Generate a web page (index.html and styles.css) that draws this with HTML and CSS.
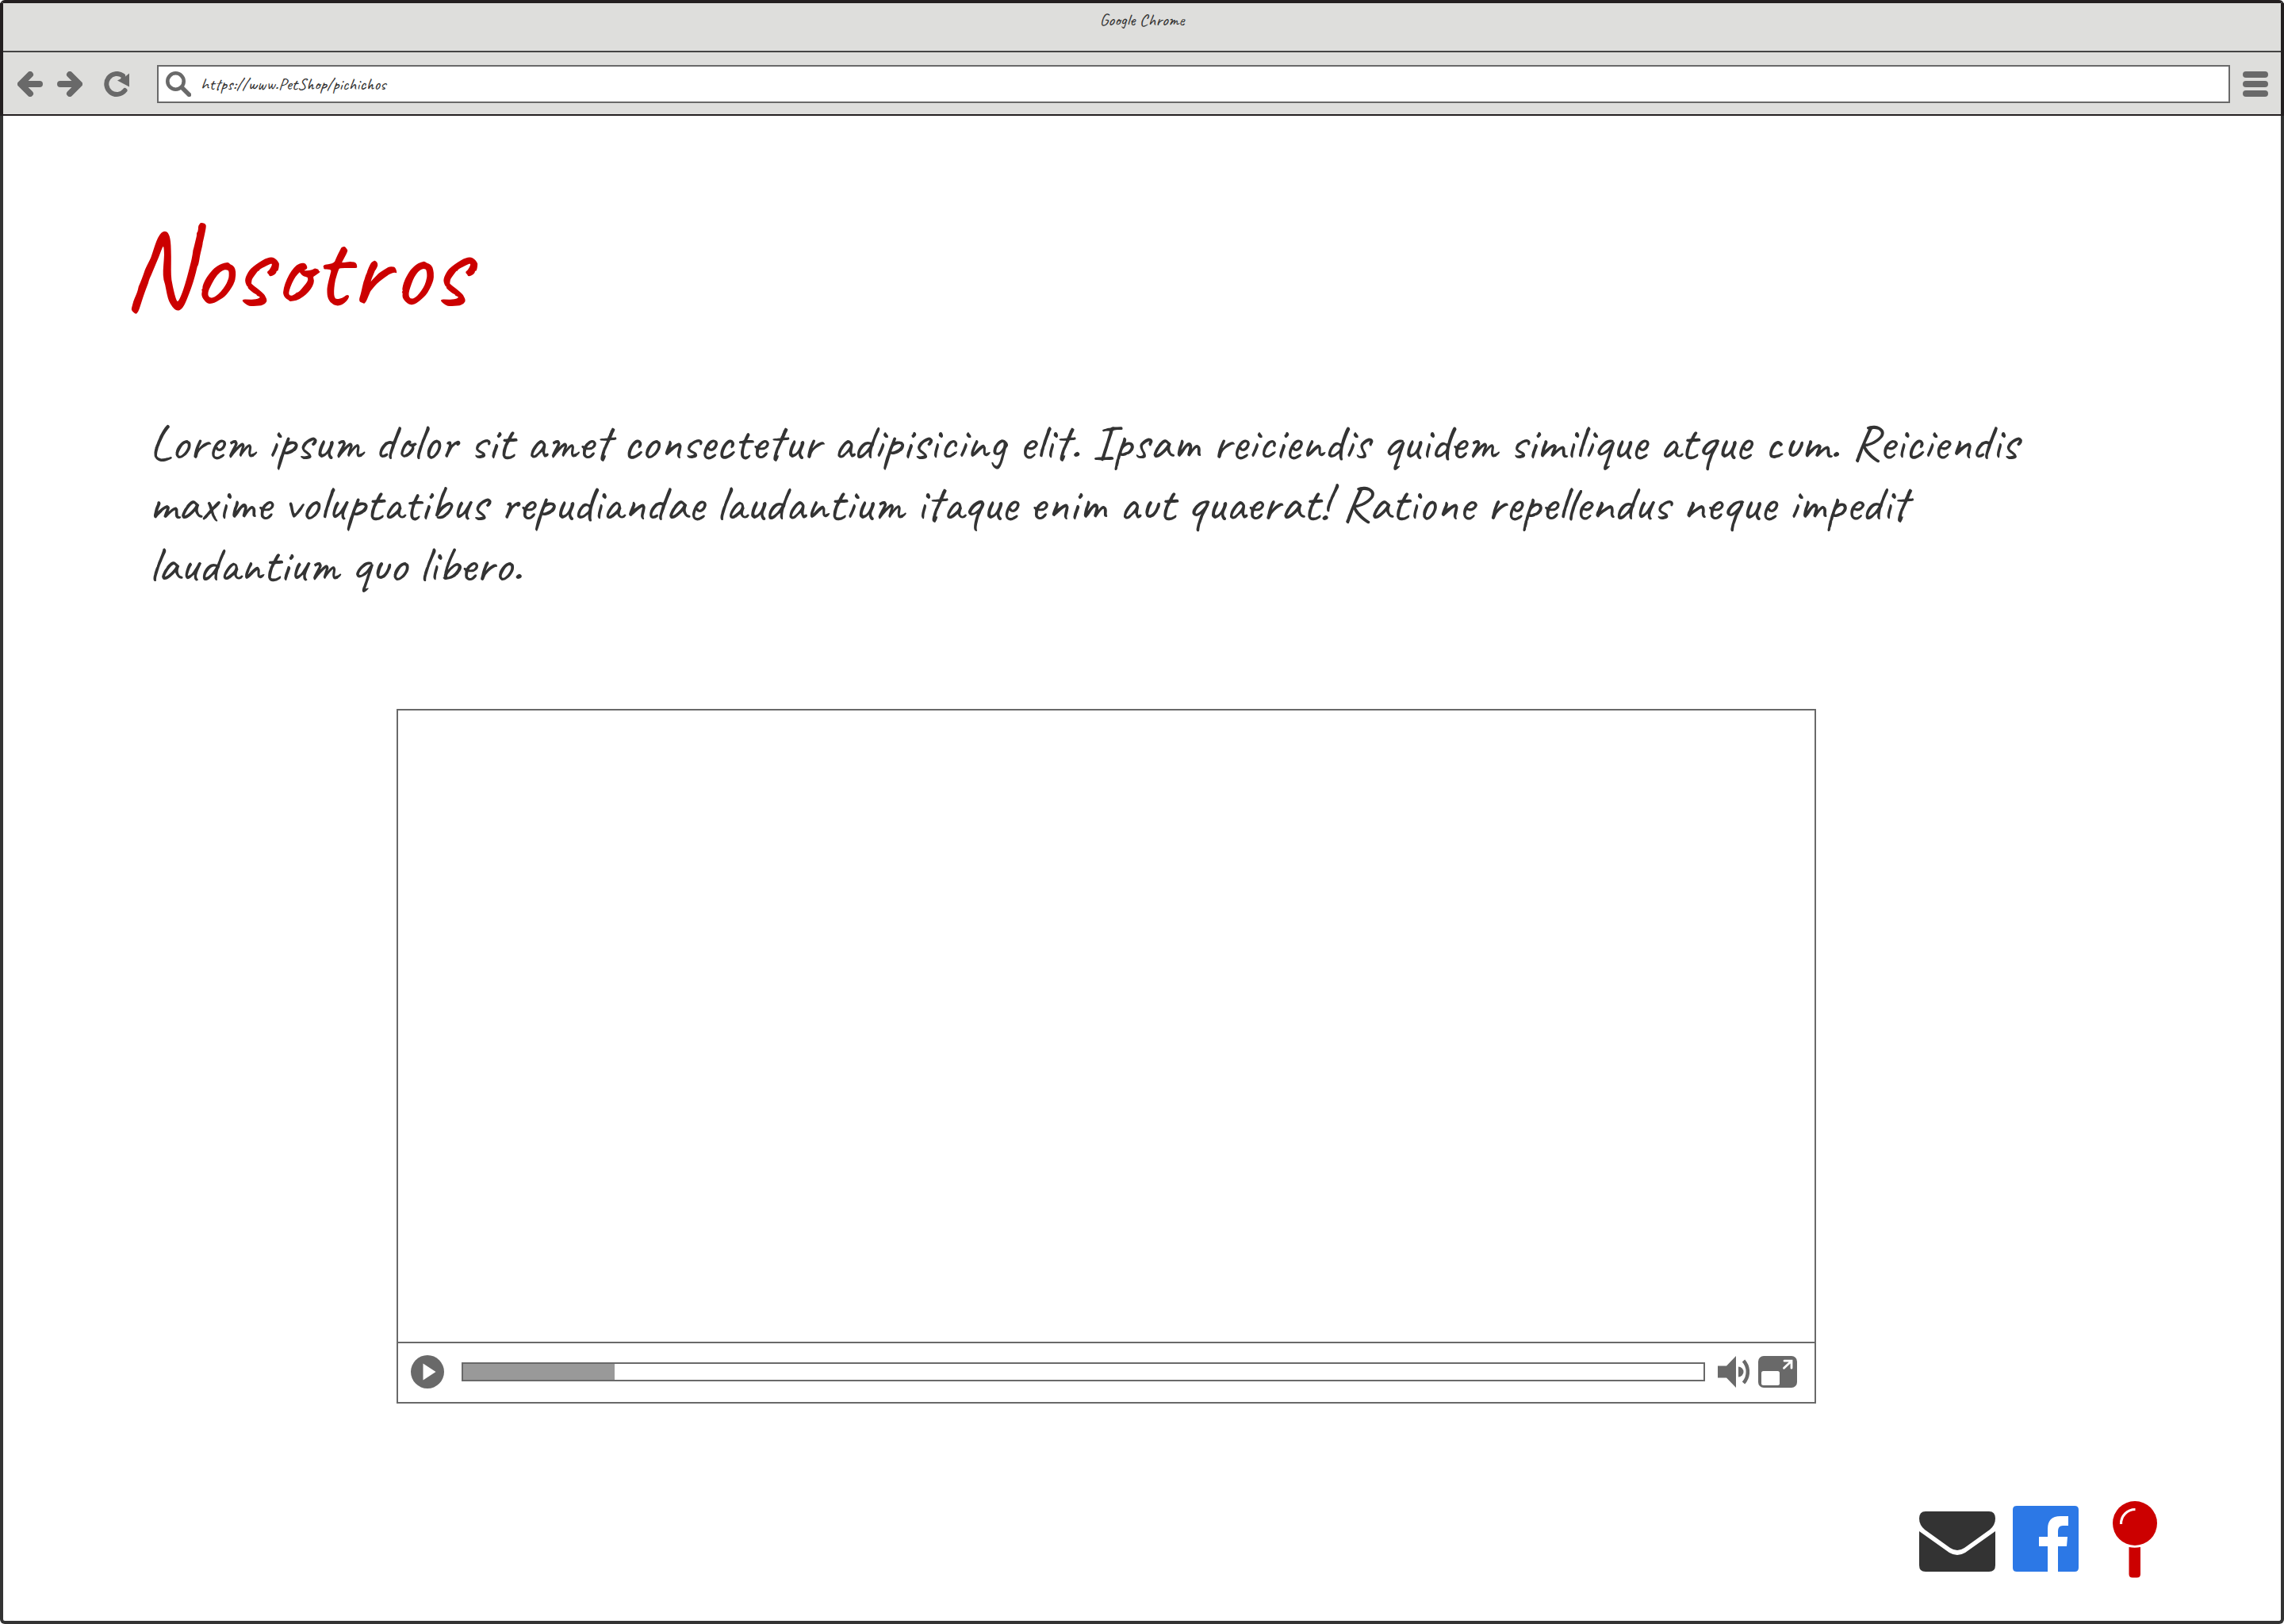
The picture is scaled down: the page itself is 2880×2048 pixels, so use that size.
FILE: index.html
```html
<!DOCTYPE html>
<html lang="es">
<head>
<meta charset="utf-8">
<title>Nosotros</title>
<link rel="stylesheet" href="styles.css">
</head>
<body>
<div class="window">
  <header class="chrome">
    <div class="titlebar">Google Chrome</div>
    <nav class="toolbar">
      <button class="tool back" type="button" aria-label="Atrás">
        <svg viewBox="0 0 32 32"><path d="M16 4 4 16l12 12M5 16h23" fill="none" stroke="currentColor" stroke-width="8" stroke-linecap="round" stroke-linejoin="round"/></svg>
      </button>
      <button class="tool forward" type="button" aria-label="Adelante">
        <svg viewBox="0 0 32 32"><path d="M16 4l12 12-12 12M27 16H4" fill="none" stroke="currentColor" stroke-width="8" stroke-linecap="round" stroke-linejoin="round"/></svg>
      </button>
      <button class="tool reload" type="button" aria-label="Recargar">
        <svg viewBox="0 0 32 32"><path d="M26.500 24A13 13 0 1 1 24 5.500" fill="none" stroke="currentColor" stroke-width="6" stroke-linecap="round"/><path d="M32 2.500v17L17 11.500l4-2 2-4 4 1z" fill="currentColor"/></svg>
      </button>
      <label class="address">
        <svg class="search" viewBox="0 0 32 32"><circle cx="12.500" cy="12.500" r="10.200" fill="none" stroke="currentColor" stroke-width="4.600"/><path d="M21 21l8.500 8.500" stroke="currentColor" stroke-width="5.500" stroke-linecap="round"/></svg>
        <input class="url" type="text" aria-label="Dirección" value="https://www.PetShop/pichichos">
      </label>
      <button class="tool menu" type="button" aria-label="Menú">
        <svg viewBox="0 0 32 32"><path d="M4 4h24M4 16h24M4 28h24" stroke="currentColor" stroke-width="8" stroke-linecap="round"/></svg>
      </button>
    </nav>
  </header>
  <main class="page">
    <h1 class="heading">Nosotros</h1>
    <p class="intro">Lorem ipsum dolor sit amet consectetur adipisicing elit. Ipsam reiciendis quidem similique atque cum. Reiciendis<br>maxime voluptatibus repudiandae laudantium itaque enim aut quaerat! Ratione repellendus neque impedit<br>laudantium quo libero.</p>
    <section class="player" aria-label="Video">
      <div class="screen"></div>
      <div class="controls">
        <button class="control play" type="button" aria-label="Reproducir">
          <svg viewBox="0 0 42 42"><circle cx="21" cy="21" r="21" fill="currentColor"/><path d="M15.500 10.500v21L31.500 21z" fill="#fff"/></svg>
        </button>
        <input class="seek" type="range" min="0" max="1000" value="122" aria-label="Progreso" style="--played: 12.2%">
        <button class="control volume" type="button" aria-label="Volumen">
          <svg viewBox="0 0 40 40"><path d="M0 12.500h11L23 0v40L11 27.500H0z" fill="currentColor"/><path d="M26 13.500a6.500 6.500 0 0 1 0 13z" fill="currentColor"/><path d="M32.500 6a21 21 0 0 1 0 28" fill="none" stroke="currentColor" stroke-width="4.500"/></svg>
        </button>
        <button class="control expand" type="button" aria-label="Pantalla completa">
          <svg viewBox="0 0 49 40"><rect width="49" height="40" rx="7" fill="currentColor"/><rect x="4" y="19" width="23" height="18" rx="2.500" fill="#fff"/><path d="M33 6.200h9v9M42 6.200l-9.500 9" fill="none" stroke="#fff" stroke-width="2.800" stroke-linecap="round"/></svg>
        </button>
      </div>
    </section>
    <footer class="links">
      <a class="mail" href="#correo" aria-label="Correo">
        <svg viewBox="0 0 96 76"><path d="M8 0h80q8 0 8 9 0 8-7 14L57 46q-9 6-18 0L7 23Q0 17 0 9 0 0 8 0z" fill="currentColor"/><path d="M0 25 38 52q10 6 20 0L96 25v43q0 8-8 8H8q-8 0-8-8z" fill="currentColor"/></svg>
      </a>
      <a class="facebook" href="#facebook" aria-label="Facebook">
        <svg viewBox="0 0 83 83"><path d="M5 0h73q5 0 5 5v73q0 5-5 5H57V51h11l1-12H57v-7q0-7 6-7h7V13H60Q44 13 44 29v10H33v12h11v32H5q-5 0-5-5V5q0-5 5-5z" fill="currentColor"/></svg>
      </a>
      <a class="pin" href="#ubicacion" aria-label="Ubicación">
        <svg viewBox="0 0 56 97"><circle cx="28" cy="28" r="28" fill="currentColor"/><path d="M10.500 29A18 18 0 0 1 28.500 10.500" fill="none" stroke="#fff" stroke-width="3.200"/><path d="M20.500 58q7 1.500 14.500 0v34q0 4.500-4.500 4.500H25q-4.500 0-4.500-4.500z" fill="currentColor"/></svg>
      </a>
    </footer>
  </main>
</div>
</body>
</html>
```
FILE: styles.css
```css
* { box-sizing: border-box; }

body {
  margin: 0;
  background: #fff;
  color: #333;
  font-family: Caveat, Lato, sans-serif;
}

svg { display: block; width: 100%; height: 100%; }

button {
  padding: 0;
  border: 0;
  background: none;
  color: inherit;
  flex: none;
}

.window {
  display: flex;
  flex-direction: column;
  min-height: 100vh;
  border: 4px solid #333;
  border-top-color: #231f20;
  border-radius: 6px;
}

.chrome {
  background: #dededc;
  border-bottom: 2px solid #231f20;
  box-shadow: -4px 0 #231f20, 4px 0 #231f20;
}

.titlebar {
  height: 62px;
  padding-top: 7px;
  border-bottom: 2px solid #444;
  font-size: 22px;
  line-height: 28px;
  text-align: center;
}

.toolbar {
  display: flex;
  align-items: center;
  height: 80px;
  padding: 0 16px 0 18px;
  color: #696969;
}

.chrome { height: 142px; }

.tool { width: 32px; height: 32px; }
.forward { margin-left: 18px; }
.reload { margin-left: 27px; }

.address {
  display: flex;
  flex: 1;
  align-items: center;
  gap: 12px;
  height: 48px;
  margin: 0 16px 0 35px;
  padding: 0 9px;
  border: 2px solid #696969;
  background: #fff;
}

.search { flex: none; width: 32px; height: 32px; }

.url {
  flex: 1;
  height: 40px;
  padding: 0;
  border: 0;
  outline: 0;
  background: none;
  color: #333;
  font: inherit;
  font-size: 22px;
}

.page {
  display: flex;
  flex: 1;
  flex-direction: column;
  padding: 112px 156px 54px 150px;
}

.heading {
  margin: 0;
  color: #c00;
  font-size: 144px;
  font-weight: 400;
  line-height: 160px;
}

.intro {
  margin: 102px 140px 0 34px;
  font-size: 64px;
  line-height: 77px;
}

.player {
  margin: 143px 430px 0 346px;
  border: 2px solid #696969;
  color: #696969;
}

.screen { aspect-ratio: 1786 / 796; }

.controls {
  display: flex;
  align-items: center;
  height: 76px;
  padding: 0 22px 2px 16px;
  border-top: 2px solid #696969;
}

.play { width: 42px; height: 42px; }

.seek {
  flex: 1;
  height: 24px;
  margin: 0 16px 0 22px;
  border: 2px solid #696969;
  background: linear-gradient(to right, #999 var(--played), #fff var(--played));
  appearance: none;
}

.seek::-webkit-slider-thumb { width: 1px; height: 20px; appearance: none; }

.volume { width: 40px; height: 40px; }
.expand { width: 49px; height: 40px; margin-left: 11px; }

.links {
  display: flex;
  align-items: flex-end;
  justify-content: flex-end;
  margin-top: auto;
}

.mail { width: 96px; height: 76px; margin-bottom: 8px; color: #333; }
.facebook { width: 83px; height: 83px; margin: 0 43px 8px 22px; color: #2c78e6; }
.pin { width: 56px; height: 97px; color: #c00; }
```
